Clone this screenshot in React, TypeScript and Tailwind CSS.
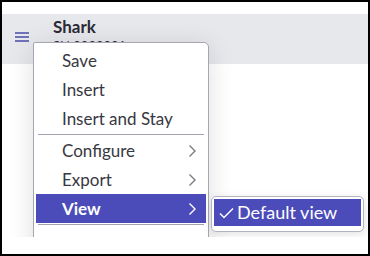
const font = { fontFamily: "Lato, 'Noto Sans', sans-serif" };

const Chevron = ({ white }: { white?: boolean }) => (
  <svg width="9" height="14" viewBox="0 0 9 14" className="mr-[9px]">
    <path
      d="M1.5 1.5 L7 7 L1.5 12.5"
      fill="none"
      stroke={white ? "#ffffff" : "#7a7a84"}
      strokeWidth={1.4}
    />
  </svg>
);

const Item = ({
  label,
  sub,
  active,
}: {
  label: string;
  sub?: boolean;
  active?: boolean;
}) => (
  <div
    className={`mx-[2px] flex h-[29px] items-center justify-between pl-[26px] text-[17px] ${
      active ? "bg-[#4b4cb9] font-bold text-white" : "text-[#38383f]"
    }`}
  >
    <span>{label}</span>
    {sub && <Chevron white={active} />}
  </div>
);

const Sep = () => <div className="mx-[4px] my-[1px] h-px bg-[#a3a3ad]" />;

export default function App() {
  return (
    <div className="h-[256px] w-[370px] bg-black p-[2px]" style={font}>
      <div className="flex h-full w-full flex-col bg-white">
        <div className="h-[12px]" />
        {/* app viewport */}
        <div className="relative h-[223px] overflow-hidden">
          <header className="flex h-[50px] items-start bg-[#e7e8ec]">
            <svg width="14" height="10" viewBox="0 0 14 10" className="ml-[13px] mt-[18px]">
              <path d="M0 1h14M0 5h14M0 9h14" stroke="#4a4aa6" strokeWidth={1.6} />
            </svg>
            <div className="ml-[24px] mt-[4px] flex flex-col leading-none">
              <span className="text-[17px] font-bold text-[#2b2b35]">Shark</span>
              <span className="mt-[5px] text-[13px] text-[#2b2b35]">SN 0000001</span>
            </div>
          </header>

          {/* context menu */}
          <div className="absolute left-[31px] top-[28px] w-[176px] rounded-tl-[2px] rounded-tr-[5px] border border-[#a6a6b2] bg-white pt-[3px] shadow-[0_4px_26px_rgba(0,0,0,0.13)]">
            <Item label="Save" />
            <Item label="Insert" />
            <Item label="Insert and Stay" />
            <Sep />
            <Item label="Configure" sub />
            <Item label="Export" sub />
            <Item label="View" sub active />
            <Sep />
            <div className="h-[40px]" />
          </div>

          {/* submenu */}
          <div className="absolute left-[209px] top-[182px] w-[153px] rounded-[5px] border border-[#b4b4be] bg-white p-[2px] pb-[5px] shadow-[0_2px_8px_rgba(0,0,0,0.12)]">
            <div className="flex h-[27px] items-center bg-[#4b4cb9] pl-[5px] text-[18px] text-white">
              <svg width="15" height="12" viewBox="0 0 15 12" className="mr-[3px]">
                <path d="M1 6.5 L5 10.5 L14 1.5" fill="none" stroke="#ffffff" strokeWidth={1.5} />
              </svg>
              <span>Default view</span>
            </div>
          </div>
        </div>
      </div>
    </div>
  );
}
